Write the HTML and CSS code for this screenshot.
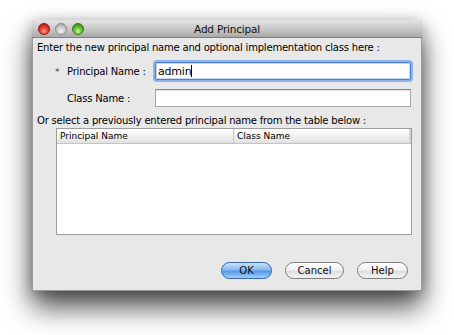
FILE: index.html
```html
<!DOCTYPE html>
<html lang="en">
  <head>
    <meta charset="utf-8" />
    <title>Add Principal</title>
    <link rel="stylesheet" href="styles.css">
  </head>
  <body>
    <div class="window">
      <div class="titlebar">
        <div class="lights">
          <span class="light red"></span>
          <span class="light gray"></span>
          <span class="light green"></span>
        </div>
        <div class="title">Add Principal</div>
      </div>
      <div class="content">
        <p class="intro">Enter the new principal name and optional implementation class here :</p>
        <div class="form-grid">
          <label class="field-label"><span class="req">*</span>Principal Name :</label>
          <div class="field focused">admin<span class="caret"></span></div>
          <label class="field-label">Class Name :</label>
          <div class="field"></div>
        </div>
        <p class="intro">Or select a previously entered principal name from the table below :</p>
        <div class="table">
          <div class="table-head">
            <div class="col col-name">Principal Name</div>
            <div class="col col-class">Class Name</div>
          </div>
        </div>
        <div class="buttons">
          <button class="btn default">OK</button>
          <button class="btn">Cancel</button>
          <button class="btn">Help</button>
        </div>
      </div>
    </div>
  </body>
</html>
```
FILE: styles.css
```css
body {
  margin: 0;
  padding: 20px 0 0 32px;
  min-height: 335px;
  box-sizing: border-box;
  background-color: #ffffff;
  font-family: "DejaVu Sans", sans-serif;
  font-size: 10px;
  letter-spacing: -0.2px;
  color: #000000;
}

.window {
  width: 390px;
  height: 271px;
  box-sizing: border-box;
  background-color: #e8e8e8;
  border: 1px solid #9a9a9a;
  border-top: none;
  border-radius: 4px 4px 0 0;
  box-shadow: 0 16px 28px rgba(0, 0, 0, 0.7), 0 2px 14px rgba(0, 0, 0, 0.25);
  display: flex;
  flex-direction: column;
}

.titlebar {
  height: 17px;
  margin: 0 -1px;
  border-radius: 4px 4px 0 0;
  background: linear-gradient(#e4e4e4, #c6c6c6 55%, #a9a9a9);
  border-bottom: 1px solid #7f7f7f;
  display: flex;
  align-items: center;
}

.lights {
  display: flex;
  gap: 5px;
  padding-left: 6px;
}

.light {
  width: 12px;
  height: 12px;
  border-radius: 50%;
  box-sizing: border-box;
}

.red {
  background: radial-gradient(circle at 50% 72%, #ff9a8e 0%, #ea3b2f 45%, #a80e0a 100%);
  border: 1px solid #8c1a15;
}

.gray {
  background: radial-gradient(circle at 50% 72%, #f4f4f4 0%, #c8c8c8 50%, #979797 100%);
  border: 1px solid #8d8d8d;
}

.green {
  background: radial-gradient(circle at 50% 72%, #ccf7a0 0%, #5fc02c 45%, #2f7d10 100%);
  border: 1px solid #3a7a1c;
}

.title {
  flex: 1;
  text-align: center;
  font-size: 10.5px;
  margin-right: 52px;
  color: #111111;
}

.content {
  flex: 1;
  padding: 0 4px 11px 4px;
  display: flex;
  flex-direction: column;
}

.intro {
  margin: 3px 0 0 0;
  line-height: 14px;
  white-space: nowrap;
}

.form-grid {
  display: grid;
  grid-template-columns: 118px 256px;
  row-gap: 9px;
  margin-top: 7px;
  margin-bottom: 4px;
  align-items: center;
}

.field-label {
  padding-left: 30px;
  white-space: nowrap;
}

.req {
  display: inline-block;
  width: 12px;
  margin-left: -12px;
  font-size: 9px;
  color: #333333;
}

.field {
  height: 18px;
  box-sizing: border-box;
  background-color: #ffffff;
  border: 1px solid #a5a5a5;
  border-top-color: #8c8c8c;
  box-shadow: inset 0 1px 1px rgba(0, 0, 0, 0.12);
  padding: 1px 2px 0 2px;
  font-size: 11px;
  line-height: 15px;
}

.field.focused {
  border: 1px solid #4f82c9;
  border-radius: 2px;
  box-shadow: 0 0 0 2px #8cb3ea, inset 0 0 0 1px #c3d7f3;
}

.caret {
  display: inline-block;
  width: 1px;
  height: 12px;
  background-color: #000000;
  vertical-align: -2px;
}

.table {
  margin-left: 19px;
  width: 356px;
  height: 107px;
  box-sizing: border-box;
  background-color: #ffffff;
  border: 1px solid #9e9e9e;
}

.table-head {
  display: flex;
  height: 14px;
  background: linear-gradient(#ffffff, #f1f1f1 50%, #e2e2e2);
  border-bottom: 1px solid #c4c4c4;
  font-size: 9px;
  letter-spacing: 0;
  line-height: 14px;
}

.col {
  padding-left: 3px;
  box-sizing: border-box;
}

.col-name {
  width: 177px;
  border-right: 1px solid #c0c0c0;
}

.col-class {
  flex: 1;
  border-right: 2px solid #d4d4d4;
}

.buttons {
  margin-top: auto;
  display: flex;
  justify-content: flex-end;
  gap: 13px;
  padding-right: 9px;
}

.btn {
  height: 17px;
  width: 59px;
  border-radius: 9px;
  border: 1px solid #7d7d7d;
  background: linear-gradient(#ffffff, #f3f3f3 45%, #dddddd 55%, #f4f4f4);
  font-family: "DejaVu Sans", sans-serif;
  font-size: 10px;
  color: #111111;
  padding: 0;
  line-height: 15px;
}

.btn.default {
  width: 51px;
  border-color: #3a64a8;
  background: linear-gradient(#c9e1fa, #86b9f0 45%, #559ae8 55%, #a3cffb);
}

.btn:last-child {
  width: 51px;
}
```
